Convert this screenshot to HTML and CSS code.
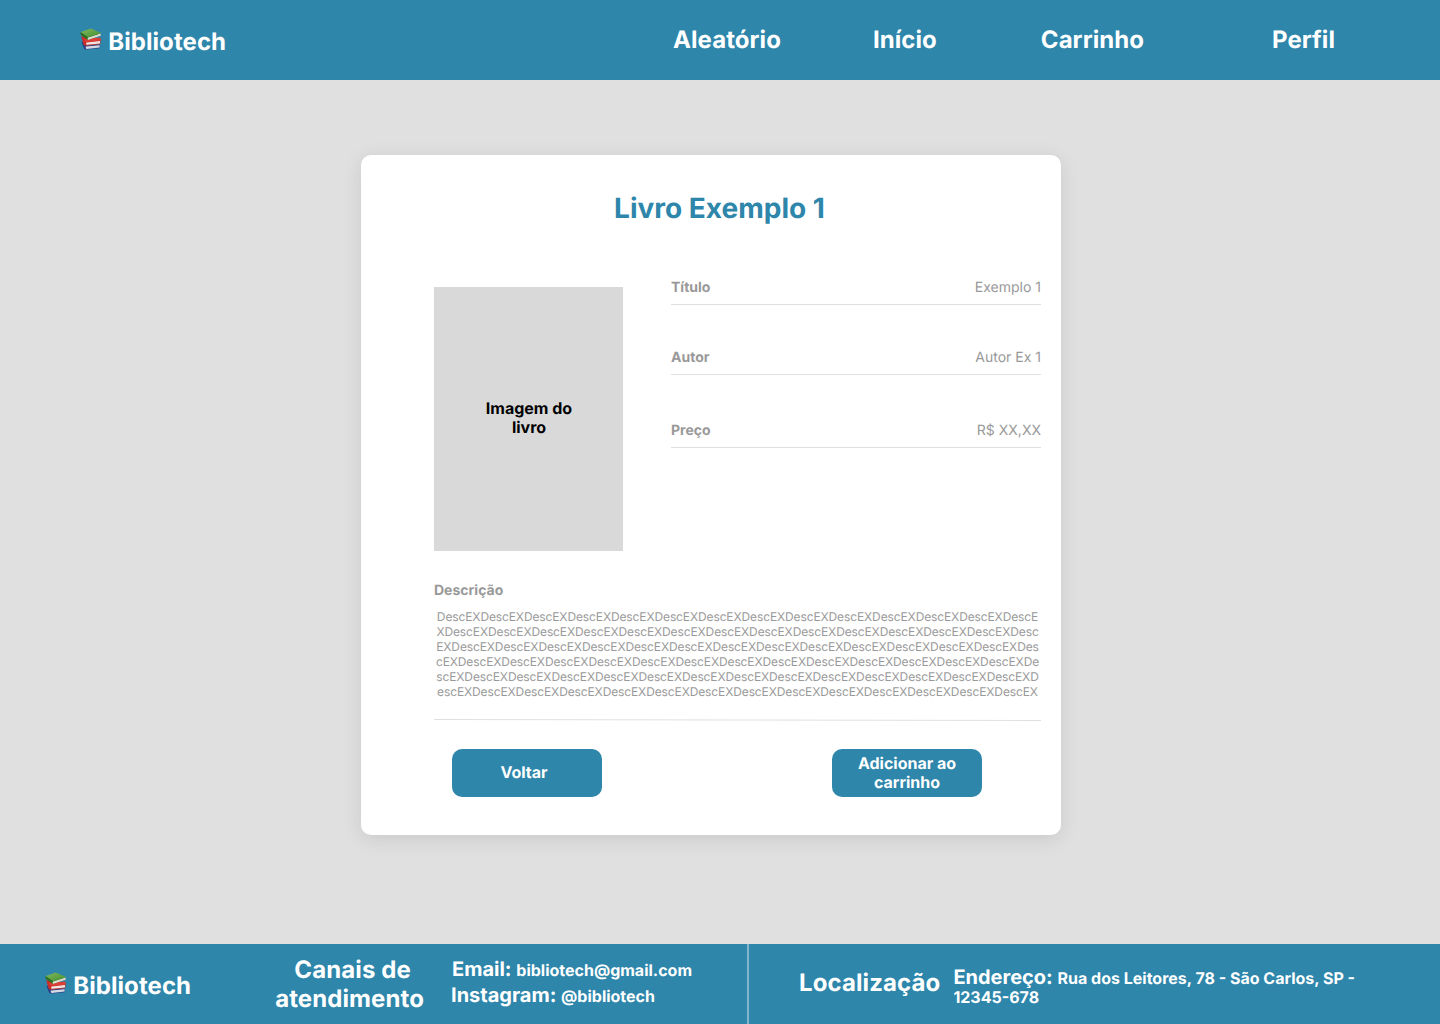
FILE: index.html
```html
<!DOCTYPE html>
<html lang="pt-BR">
<head>
<meta charset="utf-8">
<title>Bibliotech - Livro Exemplo 1</title>
<link rel="stylesheet" href="styles.css">
</head>
<body>
<svg width="0" height="0" class="defs" aria-hidden="true">
  <defs>
    <linearGradient id="cover" x1="0" y1="0" x2="1" y2="1">
      <stop offset="0" stop-color="#84b860"/><stop offset="1" stop-color="#3f8f2c"/>
    </linearGradient>
  </defs>
  <symbol id="books" viewBox="0 0 22 22">
    <path d="M1.6 14.2 4 13l1.6 4.6 14-1 .6 1.2-.3 2.4-13.6 1.4c-1.2 0-2-.4-2.4-1.3z" fill="#2b3f88"/>
    <path d="m6 18.6 13.6-1.4.1 2.2-13 1.6c-1-.4-1.3-1.5-.7-2.4z" fill="#d5d9e2"/>
    <path d="M1.2 8.2 5 9l15.3 1.4.4 1-.5 4.8-14.4 1.5c-1.2 0-2-.4-2.3-1.4z" fill="#c92d28"/>
    <path d="m6.6 14.4 13.4-1.3-.1 2.3-12.9 1.4c-1-.3-1.2-1.6-.4-2.4z" fill="#efe6e4"/>
    <path d="M3.6 11.2 20.3 9.6l.3 2.8L6 14z" fill="#dc3f36"/>
    <path d="M.6 4.2c-.5 1 0 2.6.9 3.1l6.3 4.6 13.2-4.6.2-1z" fill="#2c701f"/>
    <path d="m8.2 9.4 12.5-4c-.3.9-.2 1.6.3 2.2L8.5 11.8c-1.2-.6-1.2-1.6-.3-2.4z" fill="#e5e7dd"/>
    <path d="m8.4 10.6 12-4" stroke="#b6beae" stroke-width=".4"/>
    <path d="M.7 4.1 10.8.6l10.4 4.5L8.1 9.3z" fill="url(#cover)"/>
  </symbol>
</svg>

<header class="topbar">
  <a class="brand"><svg class="brand-icon"><use href="#books"/></svg>Bibliotech</a>
  <nav class="nav">
    <a>Aleatório</a>
    <a>Início</a>
    <a>Carrinho</a>
    <a>Perfil</a>
  </nav>
</header>

<main class="page">
  <section class="card">
    <h1 class="title">Livro Exemplo 1</h1>
    <div class="book">
      <div class="cover">Imagem do<br>livro</div>
      <dl class="facts">
        <div class="fact"><dt>Título</dt><dd>Exemplo 1</dd></div>
        <div class="fact"><dt>Autor</dt><dd>Autor Ex 1</dd></div>
        <div class="fact"><dt>Preço</dt><dd>R$ XX,XX</dd></div>
      </dl>
    </div>
    <h2 class="label">Descrição</h2>
    <p class="description">DescEXDescEXDescEXDescEXDescEXDescEXDescEXDescEXDescEXDescEXDescEXDescEXDescEXDescE<br>XDescEXDescEXDescEXDescEXDescEXDescEXDescEXDescEXDescEXDescEXDescEXDescEXDescEXDesc<br>EXDescEXDescEXDescEXDescEXDescEXDescEXDescEXDescEXDescEXDescEXDescEXDescEXDescEXDes<br>cEXDescEXDescEXDescEXDescEXDescEXDescEXDescEXDescEXDescEXDescEXDescEXDescEXDescEXDe<br>scEXDescEXDescEXDescEXDescEXDescEXDescEXDescEXDescEXDescEXDescEXDescEXDescEXDescEXD<br>escEXDescEXDescEXDescEXDescEXDescEXDescEXDescEXDescEXDescEXDescEXDescEXDescEXDescEX</p>
    <svg class="rule" viewBox="0 0 607 3"><path d="M0 .5 607 1.5" stroke="#e0e0e0"/></svg>
    <div class="actions">
      <button class="button button-back">Voltar</button>
      <button class="button">Adicionar ao<br>carrinho</button>
    </div>
  </section>
</main>

<footer class="footer">
  <div class="footer-contact">
    <a class="brand"><svg class="brand-icon"><use href="#books"/></svg>Bibliotech</a>
    <h3 class="footer-title"><span class="lead">Canais de</span><br>atendimento</h3>
    <div class="channels">
      <p class="email"><strong>Email: </strong>bibliotech@gmail.com</p>
      <p><strong>Instagram: </strong>@bibliotech</p>
    </div>
  </div>
  <div class="footer-place">
    <h3 class="footer-title">Localização</h3>
    <p class="address"><strong>Endereço: </strong>Rua dos Leitores, 78 - São Carlos, SP -<br>12345-678</p>
  </div>
</footer>
</body>
</html>
```
FILE: styles.css
```css
* { box-sizing: border-box; margin: 0; padding: 0; }

body {
  width: 1440px;
  height: 1024px;
  display: flex;
  flex-direction: column;
  background: #e0e0e0;
  font-family: Inter, sans-serif;
  text-rendering: geometricPrecision;
  overflow: hidden;
}

.defs { position: absolute; }

.topbar {
  height: 80px;
  flex: none;
  display: flex;
  justify-content: space-between;
  background: #2e86ab;
  color: #fff;
  padding: 0 105px 0 79px;
}

.brand {
  display: flex;
  font-size: 24px;
  font-weight: 700;
  line-height: 29px;
  letter-spacing: .08px;
  padding-top: 27px;
  white-space: nowrap;
}
.brand-icon { width: 22px; height: 22px; margin: 1px 6.7px 0 .5px; }

.nav {
  display: flex;
  padding-top: 25px;
  font-size: 24px;
  font-weight: 700;
  line-height: 29px;
  letter-spacing: .06px;
}
.nav a:nth-child(2) { margin-left: 92px; }
.nav a:nth-child(3) { margin-left: 104px; }
.nav a:nth-child(4) { margin-left: 128px; }

.page { flex: 1; padding: 75px 0 0 361px; }

.card {
  width: 700px;
  height: 680px;
  padding: 36px 20px 0 73px;
  background: #fff;
  border-radius: 10px;
  box-shadow: 0 4px 20px rgba(0, 0, 0, .1);
}

.title {
  color: #2e86ab;
  font-size: 28px;
  line-height: 34px;
  text-align: center;
  padding-right: 36px;
}

.book { display: flex; justify-content: space-between; height: 326px; padding-top: 53px; }

.cover {
  width: 189px;
  height: 264px;
  margin-top: 9px;
  padding: 0 0 2px 1px;
  display: flex;
  align-items: center;
  justify-content: center;
  background: #d9d9d9;
  font-size: 16px;
  font-weight: 700;
  line-height: 19px;
  text-align: center;
}

.facts { width: 370px; font-size: 14px; line-height: 17px; color: #999; }
.fact {
  display: flex;
  justify-content: space-between;
  height: 27px;
  padding-top: 1px;
  margin-bottom: 43px;
  border-bottom: 1px solid #e0e0e0;
}
.fact + .fact + .fact { margin-top: 46px; }
.fact:nth-child(2) { margin-bottom: 0; }
.fact dt, .label { font-weight: 700; }

.label { margin-top: 31px; font-size: 14px; line-height: 17px; color: #999; }

.description {
  margin-top: 10px;
  color: #999;
  font-size: 12px;
  line-height: 15px;
  letter-spacing: -.12px;
  text-align: center;
  white-space: nowrap;
}

.rule { display: block; width: 607px; height: 3px; margin-top: 20px; }

.actions { display: flex; justify-content: space-between; padding: 27px 59px 0 18px; }
.button {
  width: 150px;
  height: 48px;
  border: 0;
  border-radius: 10px;
  background: #2e86ab;
  color: #fff;
  font: 700 16px/19px Inter, sans-serif;
  text-rendering: inherit;
}
.button-back { padding: 0 6px 2px 0; }

.footer {
  flex: none;
  height: 80px;
  display: flex;
  background: #2e86ab;
  color: #fff;
  font-size: 16px;
  font-weight: 700;
}
.footer strong { font-size: 20px; font-weight: 700; }
.footer-title { font-size: 24px; line-height: 29px; letter-spacing: .1px; text-align: center; white-space: nowrap; }
.lead { padding-left: 6px; }

.footer-contact {
  width: 749px;
  display: flex;
  padding-left: 44px;
  border-right: 2px solid #82b6cd;
}
.footer-contact .footer-title { margin: 11px 0 0 84px; }
.channels { margin: 13px 0 0 27px; line-height: 24px; white-space: nowrap; }
.email { margin-bottom: 1px; padding-left: 1px; }

.footer-place { display: flex; padding-left: 50px; }
.footer-place .footer-title { margin-top: 24px; }
.address { margin: 24px 0 0 13px; line-height: 19px; white-space: nowrap; }
```
